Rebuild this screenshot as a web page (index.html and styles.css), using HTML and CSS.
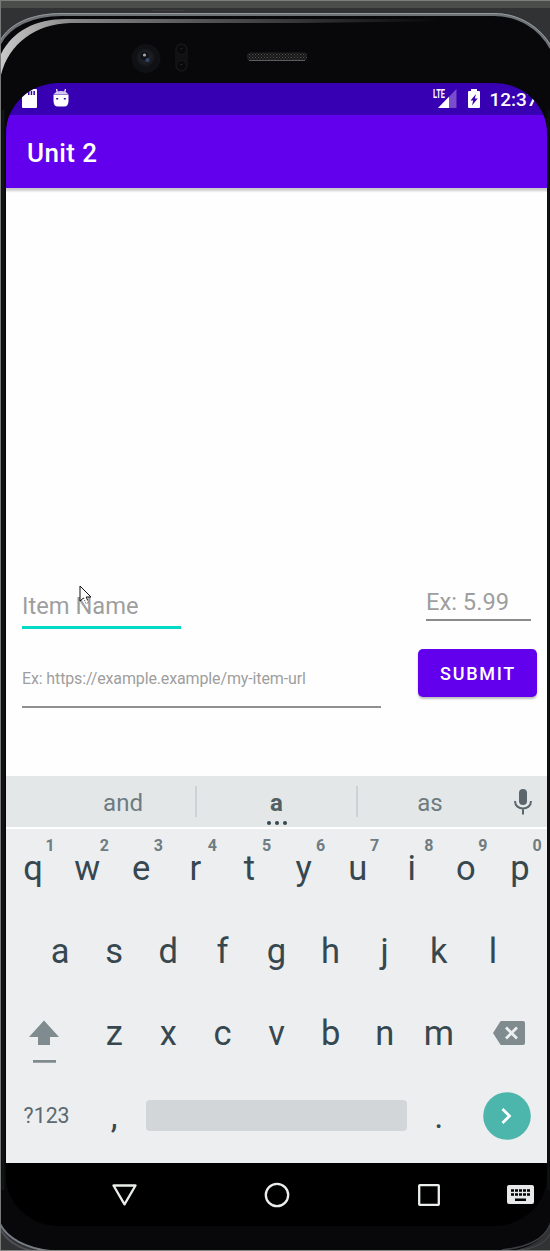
FILE: index.html
```html
<!DOCTYPE html>
<html lang="en">
<head>
<meta charset="utf-8">
<title>Unit 2</title>
<link rel="stylesheet" href="styles.css">
</head>
<body>
<div class="device">
  <svg class="frame" viewBox="0 0 550 1251" width="550" height="1251" aria-hidden="true">
    <defs>
      <linearGradient id="rim" x1="0" x2="1" y1="0" y2="0">
        <stop offset="0" stop-color="#c8c8c8"/><stop offset=".15" stop-color="#858585"/>
        <stop offset=".4" stop-color="#555"/><stop offset=".88" stop-color="#08080a"/>
      </linearGradient>
      <radialGradient id="lens"><stop offset="0" stop-color="#42475a"/><stop offset=".35" stop-color="#20232b"/><stop offset="1" stop-color="#15161a"/></radialGradient>
      <pattern id="mesh" width="3" height="3" patternUnits="userSpaceOnUse">
        <rect width="3" height="3" fill="#151515"/><path d="M0 0h1v1H0zM1.500 1.500h1v1h-1z" fill="#555"/>
      </pattern>
    </defs>
    <rect width="550" height="1251" fill="#303233"/>
    <rect width="550" height="8" fill="#4b4d4b"/>
    <rect width="550" height="1" fill="#7b7e7a"/>
    <path d="M152 10.500h33" stroke="#443a3b"/>
    <path d="M0 44C9 25 31 13 62 13H494C519 13 540 27 550 46V1222C545 1239 533 1247 510 1251H45C20 1247 6 1237 0 1222Z" fill="#08080a"/>
    <path d="M0 43C9 26 31 14.500 62 14.500H494C519 14.500 540 28 551 48" fill="none" stroke="#6c7175" stroke-width="3"/>
    <path d="M0 41C9 24 31 13.500 62 13.500H494C519 13.500 540 27 551 46" fill="none" stroke="#969a9c" stroke-width="1"/>
    <path d="M1 54C13 31 35 19 66 19H500V20.500L300 23H70C36 24 9 43 1 75Z" fill="url(#rim)"/>
    <path d="M0 1224C7 1238 25 1248 50 1251" fill="none" stroke="#777b84" stroke-width="2"/>
    <path d="M0 1229C7 1241 19 1248 32 1251" fill="none" stroke="#4e5056" stroke-width="2"/>
    <path d="M550 1225C543 1240 528 1247 502 1250" fill="none" stroke="#3c3e41" stroke-width="1.500"/>
    <path d="M550 1234C545 1243 536 1248 520 1250" fill="none" stroke="#494b4e"/>
    <path d="M.5 0V1251" stroke="#777a78"/>
    <path d="M0 1250.500H550" stroke="#858787"/>
    <path d="M3 110V1190" stroke="#111314" stroke-width="3"/>
    <path d="M548.500 110V1190" stroke="#101212" stroke-width="2"/>
    <circle cx="146" cy="58.500" r="14.500" fill="#101114"/>
    <circle cx="145.500" cy="57.500" r="9" fill="url(#lens)"/>
    <circle cx="144.500" cy="56" r="4" fill="#111217"/>
    <circle cx="144.500" cy="55" r="1.600" fill="#a5a7ac"/>
    <circle cx="147.500" cy="60" r="2" fill="#35486d"/>
    <rect x="175" y="43" width="13" height="29" rx="6.500" fill="#111113"/>
    <g fill="#09090b" stroke="#19191b"><circle cx="181.500" cy="49.500" r="5"/><circle cx="181.500" cy="65.500" r="5"/></g>
    <path d="M180.500 49l2-1M180.500 65l2-1" stroke="#2d2d30"/>
    <rect x="247" y="52.500" width="60" height="8" rx="3.500" fill="url(#mesh)"/>
    <path d="M249 60.500H305" stroke="#5c5c5c"/>
  </svg>

  <main class="screen">
    <header class="status">
      <svg class="sd" viewBox="0 0 15 19" width="15" height="19"><path d="M5 0H14Q15 0 15 1V18Q15 19 14 19H1Q0 19 0 18V5Z" fill="#fff"/><path d="M6 2h1.500v4H6zM8.700 2h1.500v4H8.700zM11.400 2h1.500v4h-1.500z" fill="#3700b3"/></svg>
      <svg class="bot" viewBox="0 0 16 19" width="16" height="19"><path d="M3.500 0L4.500 4M12.500 0L11.500 4" stroke="#fff" stroke-width="1.200"/><path d="M1 5Q3 2 8 2T15 5Z" fill="#d5c9ef"/><path d="M.5 5.500H15.500V12Q15.500 17.500 11 17.500H5Q.5 17.500 .5 12Z" fill="#fff"/><path d="M3.200 9h2v1.500h-2zM10.800 9h2v1.500h-2z" fill="#3700b3"/></svg>
      <span class="lte">LTE</span>
      <svg class="signal" viewBox="0 0 20 19" width="20" height="19"><path d="M19.500 0V19H1Z" fill="#7a4dcc"/><path d="M12 7.700V19H1Z" fill="#fff"/></svg>
      <svg class="battery" viewBox="0 0 12 19" width="12" height="19"><path d="M3 0H9V2H11Q12 2 12 3V18Q12 19 11 19H1Q0 19 0 18V3Q0 2 1 2H3Z" fill="#fff"/><path d="M8 5L2.500 11.500H5.200L4 16.500L9.700 9.500H6.800Z" fill="#3700b3"/></svg>
      <span class="clock">12:37</span>
    </header>
    <div class="appbar"><h1 class="title">Unit 2</h1></div>
    <section class="content">
      <div class="row first">
        <div class="field name">Item Name
          <svg class="cursor" viewBox="0 0 13 20" width="13" height="20"><path d="M1 1V16L4.500 13L7 18.500L9.500 17.500L7.200 12H12Z" fill="#fff"/><path d="M4.500 13L1 16V1L12 12H7.200L8.500 15" fill="none" stroke="#111"/><path d="M4.500 13L7 18.500L9.500 17.500L8.500 15" fill="none" stroke="#222" stroke-dasharray="1 1.500"/></svg>
        </div>
        <div class="field price">Ex: 5.99</div>
      </div>
      <div class="row second">
        <div class="field url">Ex: https://example.example/my-item-url</div>
        <button class="submit">SUBMIT</button>
      </div>
    </section>
    <section class="suggestions">
      <span class="word">and</span>
      <span class="word chosen">a<svg class="dots" viewBox="0 0 20 4" width="20" height="4" fill="#37474f"><circle cx="2" cy="2" r="2"/><circle cx="10" cy="2" r="2"/><circle cx="18" cy="2" r="2"/></svg></span>
      <span class="word">as</span>
      <svg class="mic" viewBox="0 0 18 26" width="18" height="26"><rect x="5" y="0" width="8" height="16" rx="4" fill="#5b676c"/><path d="M1 12C1 22 17 22 17 12M9 20V25.500" fill="none" stroke="#5b676c" stroke-width="2"/></svg>
    </section>
    <section class="keyboard">
      <div class="keys top">
        <span class="key">q<b>1</b></span><span class="key">w<b>2</b></span><span class="key">e<b>3</b></span><span class="key">r<b>4</b></span><span class="key">t<b>5</b></span><span class="key">y<b>6</b></span><span class="key">u<b>7</b></span><span class="key">i<b>8</b></span><span class="key">o<b>9</b></span><span class="key">p<b>0</b></span>
      </div>
      <div class="keys">
        <span class="key">a</span><span class="key">s</span><span class="key">d</span><span class="key">f</span><span class="key">g</span><span class="key">h</span><span class="key">j</span><span class="key">k</span><span class="key">l</span>
      </div>
      <div class="keys">
        <span class="wide shift"><svg viewBox="0 0 30 43" width="30" height="43" fill="#7f8b8f"><path d="M15 .5L30 17H21V25H9V17H0ZM4 40H27V42.700H4Z"/></svg></span>
        <span class="key">z</span><span class="key">x</span><span class="key">c</span><span class="key">v</span><span class="key">b</span><span class="key">n</span><span class="key">m</span>
        <span class="wide back"><svg viewBox="0 0 32 24" width="32" height="24"><path d="M8.500 0H30Q32 0 32 2V22Q32 24 30 24H8.500Q7.500 24 7 23L0 12L7 1Q7.500 0 8.500 0Z" fill="#7f8b8f"/><path d="M13 6.500L24 17.500M24 6.500L13 17.500" stroke="#eceef0" stroke-width="2.800"/></svg></span>
      </div>
      <div class="keys">
        <span class="wide symbols">?123</span>
        <span class="key comma">,</span>
        <span class="space"></span>
        <span class="key">.</span>
        <span class="wide enter"><svg viewBox="0 0 48 48" width="48" height="48"><circle cx="24" cy="24" r="23.800" fill="#4db6ac"/><path d="M19.500 17L26.500 24L19.500 31" fill="none" stroke="#fff" stroke-width="2.700"/></svg></span>
      </div>
    </section>
    <nav class="nav">
      <svg class="nav-back" viewBox="0 0 25 22" width="25" height="22"><path d="M1.500 1.500H23.500L12.500 20.300Z" fill="none" stroke="#e9eee9" stroke-width="2.300" stroke-linejoin="round"/></svg>
      <svg class="nav-home" viewBox="0 0 26 26" width="26" height="26"><circle cx="13" cy="13" r="11.200" fill="none" stroke="#ebefeb" stroke-width="2.300"/></svg>
      <svg class="nav-recent" viewBox="0 0 22 22" width="22" height="22"><rect x="1.200" y="1.200" width="19.600" height="19.600" rx=".6" fill="none" stroke="#ebefeb" stroke-width="2.300"/></svg>
      <svg class="nav-ime" viewBox="0 0 27 19" width="27" height="19"><rect width="27" height="19" rx="2" fill="#e6e8ea"/><path d="M4 5.500H23M4 9.500H23" stroke="#000" stroke-width="2.700" stroke-dasharray="3 1"/><path d="M8 14.700H19" stroke="#000" stroke-width="2.500"/></svg>
    </nav>
  </main>
</div>
</body>
</html>
```
FILE: styles.css
```css
* { box-sizing: border-box; }
body { margin: 0; font-family: Roboto, "Liberation Sans", sans-serif; background: #303233; }
svg { display: block; flex: none; }
.device { display: grid; width: 550px; height: 1251px; overflow: hidden; }
.frame, .screen { grid-area: 1 / 1; }
.screen {
  width: 541px; height: 1143px; margin: 83px 0 0 6px;
  display: flex; flex-direction: column; overflow: hidden;
  border-radius: 53px / 50px; z-index: 1;
}

.status { height: 32px; flex: none; background: #3700b3; color: #fff; display: flex; align-items: flex-start; padding: 6px 0 0 16px; }
.bot { margin-left: 16px; }
.lte { margin-left: auto; width: 13px; font-size: 12px; font-weight: 700; line-height: 10px; transform: scaleX(.62); transform-origin: left; white-space: nowrap; }
.signal { margin-left: -9px; }
.battery { margin-left: 11px; }
.clock { width: 67px; padding-left: 9.500px; font-size: 19px; font-weight: 500; line-height: 22px; white-space: nowrap; }

.appbar { position: relative; height: 73px; flex: none; background: #6200ee; display: flex; align-items: center; padding-left: 21px; box-shadow: 0 2px 2px 1px rgba(0,0,0,.2); z-index: 1; }
.title { margin: 0; color: #fff; font-size: 26px; font-weight: 500; line-height: 30px; padding-top: 2px; letter-spacing: .4px; }

.content { height: 588px; flex: none; padding: 397px 10px 0 16px; background: #fefefe; }
.row { display: flex; justify-content: space-between; align-items: flex-start; }
.row.first { height: 64px; padding-right: 6px; }
.field { color: #9e9e9e; white-space: nowrap; }
.name { position: relative; width: 159px; height: 44px; font-size: 23.700px; line-height: 42px; border-bottom: 3px solid #03dac5; }
.cursor { position: absolute; left: 57px; top: 0; }
.price { width: 105px; height: 36px; font-size: 23.700px; line-height: 34px; border-bottom: 2px solid #8b8b8b; }
.url { width: 359px; height: 59px; font-size: 16px; line-height: 59px; letter-spacing: -.13px; border-bottom: 2px solid #8f8f8f; }
.submit { width: 119px; height: 48px; margin: 0; padding: 2px 0 0 1px; border: 0; border-radius: 5px; background: #6200ee; color: #fff; font: 500 18px/46px Roboto, sans-serif; letter-spacing: 1.700px; box-shadow: 0 2px 2px rgba(0,0,0,.25); }

.suggestions { height: 51px; flex: none; display: flex; align-items: center; padding-left: 45px; background: #e3e7e8; color: #6e7b80; }
.word { width: 144px; height: 31px; padding-top: 2px; text-align: center; font-size: 24px; line-height: 30px; }
.chosen { position: relative; width: 163px; border: solid #cdd2d4; border-width: 0 2px; color: #525f64; font-weight: 700; }
.dots { position: absolute; left: 70px; bottom: -8px; }
.mic { margin-left: 12px; }

.keyboard { height: 336px; flex: none; border-top: 2px solid #fff; background: #eceef0; color: #37474f; }
.keys { height: 82.500px; display: flex; align-items: center; justify-content: center; }
.keys.top { height: 80.500px; padding-bottom: 2px; }
.key { position: relative; width: 54.100px; text-align: center; font-size: 34.500px; line-height: 82px; }
.key b { position: absolute; left: 39.500px; top: 9px; font-size: 16px; font-weight: 700; line-height: 20px; color: #6f7c81; }
.wide { width: 81.150px; display: flex; justify-content: center; }
.shift { padding: 16px 5px 0 0; }
.back { padding-left: 6px; }
.symbols { font-size: 21.300px; color: #5c696e; }
.space { width: 261px; height: 31px; margin: 0 4.750px; border-radius: 4px; background: #d2d6d9; }
.enter { padding-left: 1px; }

.nav { height: 63px; flex: none; display: flex; align-items: center; padding-left: 106px; background: #000; }
.nav-home { margin-left: 126.500px; }
.nav-recent { margin-left: 128.500px; }
.nav-ime { margin-left: 67px; }
```
